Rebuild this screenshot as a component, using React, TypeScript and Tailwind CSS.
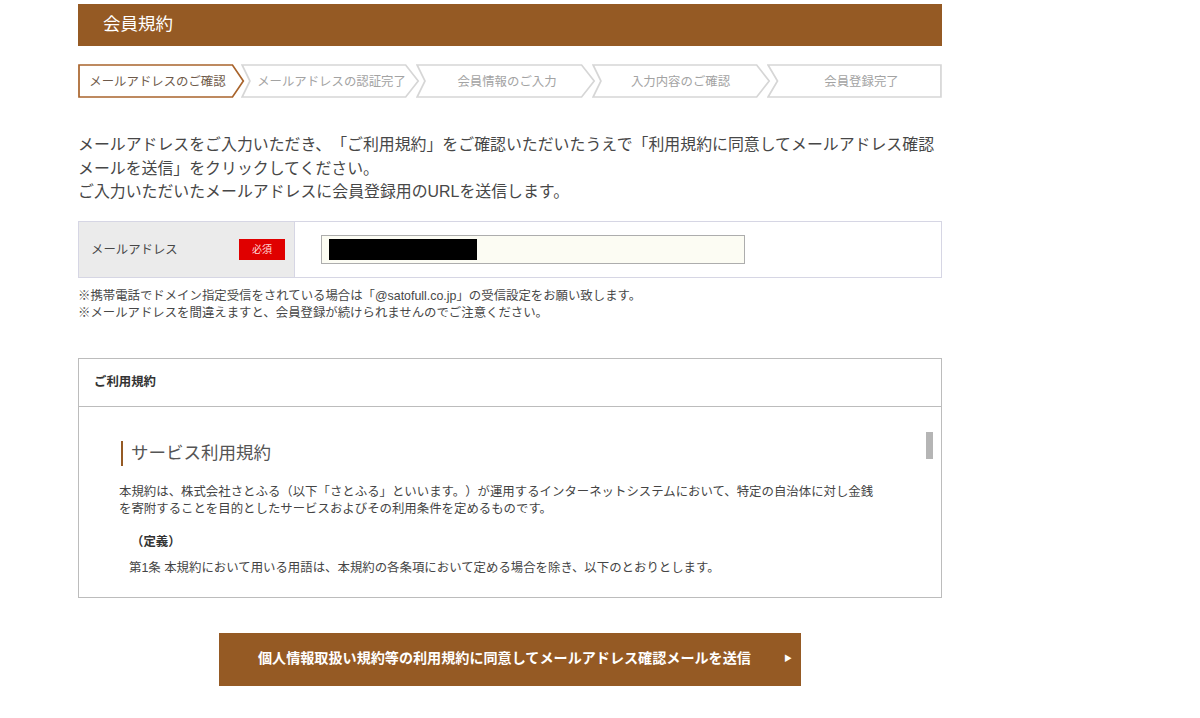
import React from 'react';

const steps = [
  { label: 'メールアドレスのご確認', width: 'w-[167px]', textClass: 'text-[#6e5a4a] pr-[8px]', active: true, first: true },
  { label: 'メールアドレスの認証完了', width: 'w-[179px]', textClass: 'text-[#a3a3a3] pl-[2px]', active: false },
  { label: '会員情報のご入力', width: 'w-[180px]', textClass: 'text-[#a3a3a3] pl-[2px]', active: false },
  { label: '入力内容のご確認', width: 'w-[179px]', textClass: 'text-[#a3a3a3] pr-[2px]', active: false },
  { label: '会員登録完了', width: 'w-[175px]', textClass: 'text-[#a3a3a3] pl-[14px]', active: false, last: true },
];

function Step({ label, width, textClass, active, first, last }: { label: string; width: string; textClass: string; active: boolean; first?: boolean; last?: boolean }) {
  // every shape is drawn in a 100x34 box stretched to the step width
  let points = '0.6,1 92,1 99,17 92,33 0.6,33 5,17';
  if (first) points = '0.6,1 92.5,1 99,17 92.5,33 0.6,33';
  if (last) points = '0.6,1 99.4,1 99.4,33 0.6,33 6,17';

  return (
    <div className={`relative h-[34px] flex items-center justify-center ${width} ${first ? '' : '-ml-[4px]'}`}>
      <svg viewBox="0 0 100 34" preserveAspectRatio="none" className="absolute inset-0 w-full h-full">
        <polygon
          points={points}
          fill="#fff"
          stroke={active ? '#a9642c' : '#d6d6d6'}
          strokeWidth="1.7"
          vectorEffect="non-scaling-stroke"
        />
      </svg>
      <span className={`relative mt-[2px] text-[12.4px] ${textClass}`}>{label}</span>
    </div>
  );
}

export default function App() {
  return (
    <div className="min-h-[718px] bg-white pl-[78px] pt-[4px] text-[#474747] [text-spacing-trim:space-all] font-['Liberation_Sans','Noto_Sans_CJK_JP',sans-serif]">
      <div className="w-[864px]">
        {/* Header */}
        <div className="h-[42px] bg-[#955a24] text-white text-[17.5px] pl-[25px] pb-[2px] flex items-center">会員規約</div>

        {/* Steps */}
        <div className="flex mt-[18px]">
          {steps.map((s) => (
            <Step key={s.label} {...s} />
          ))}
        </div>

        {/* Intro */}
        <p className="mt-[35px] text-[15.9px] leading-[23.5px]">
          メールアドレスをご入力いただき、「ご利用規約」をご確認いただいたうえで「利用規約に同意してメールアドレス確認
          <br />
          メールを送信」をクリックしてください。
          <br />
          ご入力いただいたメールアドレスに会員登録用のURLを送信します。
        </p>

        {/* Email */}
        <div className="mt-[17px] h-[57px] flex border border-[#d6d6e4]">
          <div className="w-[216px] bg-[#ebebeb] border-r border-[#d6d6e4] flex items-center justify-between pl-[12px] pr-[9px]">
            <span className="text-[12.4px] mt-[2px]">メールアドレス</span>
            <span className="w-[46px] h-[21px] bg-[#e00000] text-[#ffd9d9] text-[10px] flex items-center justify-center">必須</span>
          </div>
          <div className="flex items-center pl-[26px]">
            <div className="w-[424px] h-[29px] bg-[#fcfcf3] border border-[#adadad] pl-[7px] flex items-center">
              <div className="w-[148px] h-[21px] bg-black" />
            </div>
          </div>
        </div>

        {/* Notes */}
        <div className="mt-[10px] text-[12.4px] leading-[17px]">
          <p>※携帯電話でドメイン指定受信をされている場合は「@satofull.co.jp」の受信設定をお願い致します。</p>
          <p>※メールアドレスを間違えますと、会員登録が続けられませんのでご注意ください。</p>
        </div>

        {/* Terms */}
        <div className="mt-[36px] h-[240px] border border-[#bcbcbc] flex flex-col">
          <div className="h-[48px] shrink-0 border-b border-[#bcbcbc] flex items-center pl-[15px] text-[12.4px] font-bold text-[#333]">ご利用規約</div>
          <div className="relative grow pl-[40px] pt-[34px]">
            <h2 className="ml-[2px] border-l-2 border-[#955a24] pl-[8px] h-[25px] flex items-center text-[17.5px] text-[#555]">サービス利用規約</h2>
            <p className="mt-[18px] text-[12.42px] leading-[17px] w-[780px] text-[#444]">
              本規約は、株式会社さとふる（以下「さとふる」といいます。）が運用するインターネットシステムにおいて、特定の自治体に対し金銭
              <br />
              を寄附することを目的としたサービスおよびその利用条件を定めるものです。
            </p>
            <p className="mt-[16px] pl-[12px] text-[12.42px] font-bold leading-[17px] text-[#333]">（定義）</p>
            <p className="mt-[9px] pl-[10px] text-[12.42px] leading-[17px] text-[#444]">第1条 本規約において用いる用語は、本規約の各条項において定める場合を除き、以下のとおりとします。</p>
            <div className="absolute left-[847px] top-[25px] w-[7px] h-[27px] bg-[#b5b5b5]" />
          </div>
        </div>

        {/* Submit */}
        <div className="mt-[35px] ml-[141px] w-[582px] h-[53px] bg-[#955a24] text-white text-[14.1px] font-bold flex items-center pl-[39px] relative">
          個人情報取扱い規約等の利用規約に同意してメールアドレス確認メールを送信
          <span className="absolute right-[9px] text-[8px] font-normal">▶</span>
        </div>
      </div>
    </div>
  );
}
